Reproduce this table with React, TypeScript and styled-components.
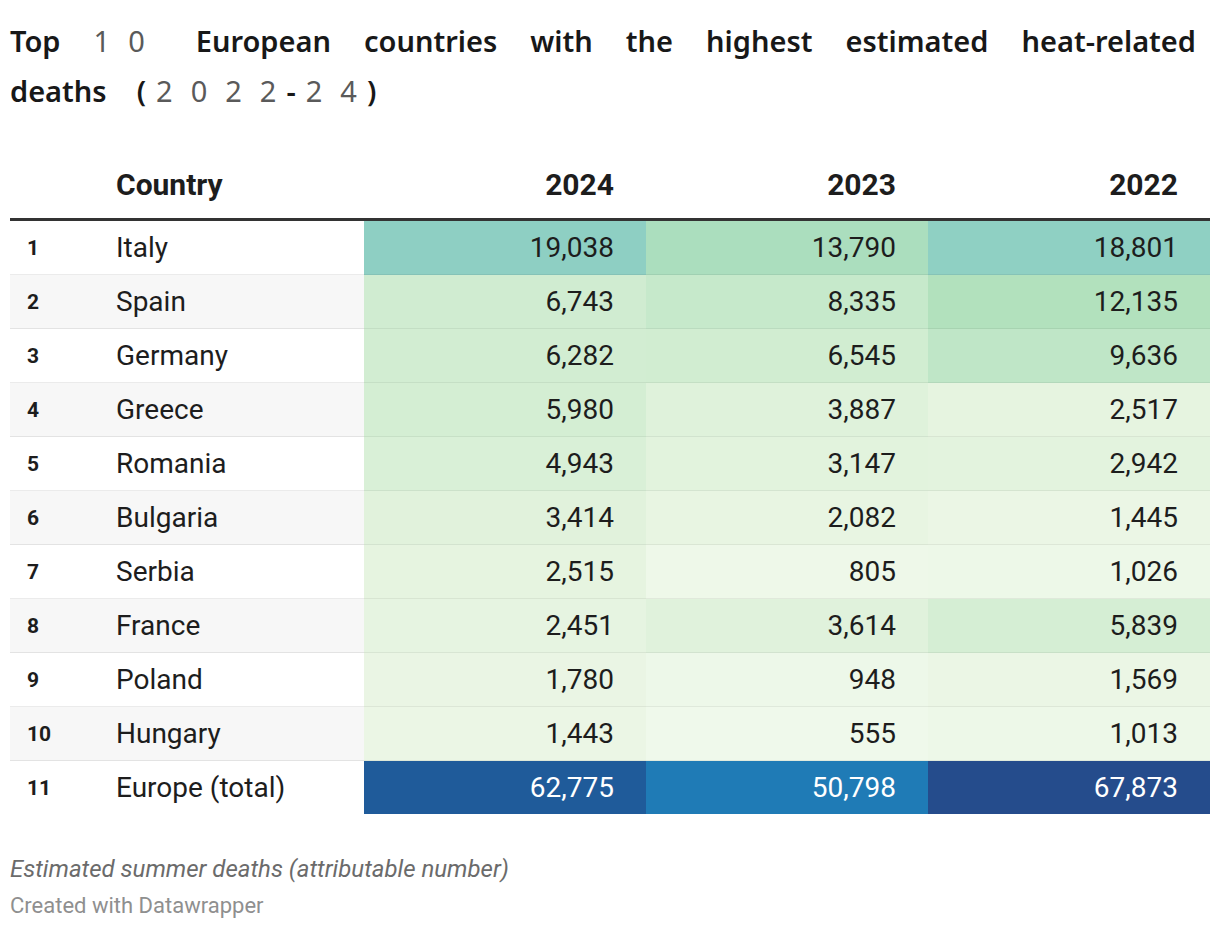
import React from "react";
import styled, { createGlobalStyle } from "styled-components";

const GlobalStyle = createGlobalStyle`
  html, body { margin: 0; padding: 0; background: #ffffff; }
  body { font-family: Roboto, "Noto Sans", "Liberation Sans", sans-serif; color: #1d1d1d; }
`;

const Page = styled.div`
  padding: 10px;
  width: 1200px;
`;

const Title = styled.h1`
  margin: 6px 0 0;
  padding-right: 14px;
  font-family: "Noto Sans", "Liberation Sans", sans-serif;
  font-weight: 600;
  font-size: 29px;
  line-height: 50px;
  text-align: justify;
  color: #181818;
`;

const Digits = styled.span<{ $spacing: number }>`
  font-weight: 400;
  color: #5a5a5a;
  letter-spacing: ${(p) => p.$spacing}px;
`;

const Tail = styled.span`
  white-space: nowrap;
`;

const Years = styled.span`
  letter-spacing: 10px;
  margin-left: 30px;
`;

function SpacedDigits({ text, trailing }: { text: string; trailing: number }) {
  return (
    <>
      <Digits $spacing={18}>{text.slice(0, -1)}</Digits>
      <Digits $spacing={trailing}>{text.slice(-1)}</Digits>
    </>
  );
}

const Table = styled.table`
  margin-top: 34px;
  width: 1200px;
  table-layout: fixed;
  border-collapse: separate;
  border-spacing: 0;
`;

const HeadCell = styled.th<{ $align?: "left" | "right"; $pad?: number }>`
  height: 68px;
  padding: 0;
  padding-left: ${(p) => (p.$align === "right" ? 0 : p.$pad ?? 0)}px;
  padding-right: ${(p) => (p.$align === "right" ? 32 : 0)}px;
  text-align: ${(p) => p.$align ?? "left"};
  vertical-align: middle;
  font-family: Roboto, sans-serif;
  font-weight: 700;
  font-size: 30px;
  color: #1d1d1d;
  border-bottom: 3px solid #333333;
`;

const RankCell = styled.td<{ $stripe: boolean; $last: boolean }>`
  height: 53px;
  padding: 0 0 0 17px;
  font-family: Roboto, sans-serif;
  font-weight: 700;
  font-size: 21px;
  color: #1d1d1d;
  background: ${(p) => (p.$stripe ? "#f7f7f7" : "#ffffff")};
  border-bottom: 1px solid ${(p) => (p.$last ? "transparent" : "rgba(0, 0, 0, 0.08)")};
`;

const NameCell = styled.td<{ $stripe: boolean; $last: boolean }>`
  height: 53px;
  padding: 0 0 0 10px;
  font-family: Roboto, sans-serif;
  font-weight: 400;
  font-size: 28px;
  color: #1d1d1d;
  white-space: nowrap;
  background: ${(p) => (p.$stripe ? "#f7f7f7" : "#ffffff")};
  border-bottom: 1px solid ${(p) => (p.$last ? "transparent" : "rgba(0, 0, 0, 0.08)")};
`;

const ValueCell = styled.td<{ $bg: string; $light: boolean; $last: boolean }>`
  height: 53px;
  padding: 0 32px 0 0;
  text-align: right;
  font-family: Roboto, sans-serif;
  font-weight: 400;
  font-size: 28px;
  color: ${(p) => (p.$light ? "#ffffff" : "#1d1d1d")};
  background: ${(p) => p.$bg};
  background-clip: ${(p) => (p.$last ? "padding-box" : "border-box")};
  border-bottom: 1px solid ${(p) => (p.$last ? "transparent" : "rgba(0, 0, 0, 0.06)")};
`;

const Notes = styled.p`
  margin: 38px 0 0;
  font-family: Roboto, sans-serif;
  font-style: italic;
  font-size: 24px;
  line-height: 32px;
  color: #6b6b6b;
`;

const Credit = styled.p`
  margin: 5px 0 0;
  font-family: Roboto, sans-serif;
  font-size: 22px;
  line-height: 32px;
  color: #8f8f8f;
`;

const stops: [number, string][] = [
  [0, "#f1f9ed"],
  [555, "#eff9eb"],
  [1500, "#ebf6e5"],
  [3000, "#e3f3de"],
  [6000, "#d4eed3"],
  [9600, "#bfe6c7"],
  [12100, "#b2e1bd"],
  [13800, "#abdebe"],
  [19000, "#8ecfc3"],
  [35000, "#52aac9"],
  [50800, "#1f7bb6"],
  [62775, "#1f5b9a"],
  [67873, "#254c8c"],
];

const hex = (h: string) => [1, 3, 5].map((i) => parseInt(h.slice(i, i + 2), 16));

function colorFor(v: number): string {
  for (let i = 0; i < stops.length - 1; i++) {
    const [a, ca] = stops[i];
    const [b, cb] = stops[i + 1];
    if (v >= a && v <= b) {
      const t = (v - a) / (b - a);
      const x = hex(ca);
      const y = hex(cb);
      const c = x.map((n, k) => Math.round(n + (y[k] - n) * t));
      return `rgb(${c[0]}, ${c[1]}, ${c[2]})`;
    }
  }
  return stops[stops.length - 1][1];
}

const rows: [string, number, number, number][] = [
  ["Italy", 19038, 13790, 18801],
  ["Spain", 6743, 8335, 12135],
  ["Germany", 6282, 6545, 9636],
  ["Greece", 5980, 3887, 2517],
  ["Romania", 4943, 3147, 2942],
  ["Bulgaria", 3414, 2082, 1445],
  ["Serbia", 2515, 805, 1026],
  ["France", 2451, 3614, 5839],
  ["Poland", 1780, 948, 1569],
  ["Hungary", 1443, 555, 1013],
  ["Europe (total)", 62775, 50798, 67873],
];

const fmt = (n: number) => n.toLocaleString("en-US");

export default function App() {
  return (
    <>
      <GlobalStyle />
      <Page>
        <Title>
          Top <SpacedDigits text="10" trailing={18} /> European countries with the highest estimated
          heat-related{" "}
          <Tail>
            deaths
            <Years>
              (<SpacedDigits text="2022" trailing={10} />-<SpacedDigits text="24" trailing={10} />)
            </Years>
          </Tail>
        </Title>
        <Table>
          <colgroup>
            <col style={{ width: 96 }} />
            <col style={{ width: 258 }} />
            <col style={{ width: 282 }} />
            <col style={{ width: 282 }} />
            <col style={{ width: 282 }} />
          </colgroup>
          <thead>
            <tr>
              <HeadCell />
              <HeadCell $pad={10}>Country</HeadCell>
              <HeadCell $align="right">2024</HeadCell>
              <HeadCell $align="right">2023</HeadCell>
              <HeadCell $align="right">2022</HeadCell>
            </tr>
          </thead>
          <tbody>
            {rows.map(([name, a, b, c], i) => {
              const stripe = i % 2 === 1;
              const last = i === rows.length - 1;
              return (
                <tr key={name}>
                  <RankCell $stripe={stripe} $last={last}>
                    {i + 1}
                  </RankCell>
                  <NameCell $stripe={stripe} $last={last}>
                    {name}
                  </NameCell>
                  {[a, b, c].map((v, k) => (
                    <ValueCell key={k} $bg={colorFor(v)} $light={v > 30000} $last={last}>
                      {fmt(v)}
                    </ValueCell>
                  ))}
                </tr>
              );
            })}
          </tbody>
        </Table>
        <Notes>Estimated summer deaths (attributable number)</Notes>
        <Credit>Created with Datawrapper</Credit>
      </Page>
    </>
  );
}
